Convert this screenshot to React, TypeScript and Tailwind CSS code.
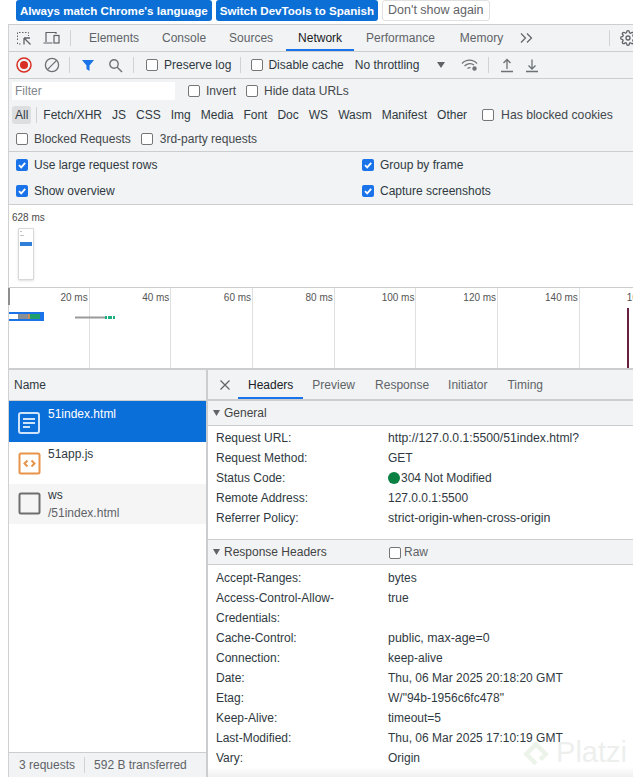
import React from "react";

const Check = ({ on = false, className = "" }: { on?: boolean; className?: string }) =>
  on ? (
    <span className={"flex h-3 w-3 shrink-0 items-center justify-center rounded-[2px] bg-[#1a73e8] " + className}>
      <svg width="10" height="10" viewBox="0 0 10 10" fill="none" stroke="#fff" strokeWidth="1.8">
        <path d="M2 5.2 4.2 7.4 8.2 2.8" />
      </svg>
    </span>
  ) : (
    <span className={"block h-3 w-3 shrink-0 rounded-[2px] border border-[#767676] bg-white " + className} />
  );

const Sep = ({ className = "" }: { className?: string }) => <span className={"block h-4 w-px shrink-0 bg-[#d0d3d6] " + className} />;

const Tab = ({ label, className = "", active = false, wide = false }: { label: string; className?: string; active?: boolean; wide?: boolean }) => (
  <div className={"relative flex h-full items-center " + (active ? "text-[#202124] " : "text-[#5f6368] ") + className}>
    {label}
    {active && <span className={"absolute bottom-0 h-[2px] bg-[#1a73e8] " + (wide ? "left-[-12px] right-[-12px]" : "left-[-10px] right-[-10px]")} />}
  </div>
);

const Row = ({ k, v, className = "" }: { k: string; v: React.ReactNode; className?: string }) => (
  <div className={"flex h-5 items-center " + className}>
    <span className="w-[180px] shrink-0 pl-[8px] text-[#303942]">{k}</span>
    <span className="whitespace-nowrap text-[#303942]">{v}</span>
  </div>
);

const ticks = ["20 ms", "40 ms", "60 ms", "80 ms", "100 ms", "120 ms", "140 ms", "160 ms"];
const filters = ["Fetch/XHR", "JS", "CSS", "Img", "Media", "Font", "Doc", "WS", "Wasm", "Manifest", "Other"];

export default function App() {
  return (
    <div className="relative h-[777px] w-[633px] overflow-hidden bg-white text-[12px] leading-none text-[#303942] [font-family:'Liberation_Sans',Arial,sans-serif]">
      {/* Info bar */}
      <div className="flex h-[24px] items-start gap-[4px] pl-[16px]">
        <button className="flex h-[21px] items-center rounded-[3px] bg-[#0b6fd6] px-[4px] text-[11.6px] font-bold text-white">Always match Chrome's language</button>
        <button className="flex h-[21px] items-center rounded-[3px] bg-[#0b6fd6] px-[4px] text-[11.6px] font-bold text-white">Switch DevTools to Spanish</button>
        <button className="flex h-[21px] items-center rounded-[3px] border border-[#e0e0e0] bg-white px-[5px] text-[12.5px] font-normal text-[#5f6368]">Don't show again</button>
      </div>

      <div className="ml-[8px] border-l border-[#cfd1d3]">
        {/* Tabs */}
        <div className="flex h-[28px] items-center border-y border-[#cbcdcf] bg-[#f1f3f4]">
          <svg className="ml-[7px] shrink-0" width="16" height="16" viewBox="0 0 16 16" fill="none" stroke="#5f6368">
            <path d="M1.5 10V2.5h11V6" strokeDasharray="1.5 1.5" />
            <path d="M1.5 12.5v1.5h3" strokeDasharray="1.5 1.5" />
            <path d="M8 8v6.5M8 8l6 0M8 8l6.5 6.5" strokeWidth="1.3" />
          </svg>
          <svg className="ml-[11px] shrink-0" width="18" height="16" viewBox="0 0 18 16" fill="none" stroke="#5f6368" strokeWidth="1.2">
            <path d="M3 12V2.5h10V4M.5 13h9" />
            <rect x="11" y="5.5" width="5" height="7.5" />
          </svg>
          <Sep className="ml-[9px]" />
          <Tab label="Elements" className="ml-[18px]" />
          <Tab label="Console" className="ml-[23px]" />
          <Tab label="Sources" className="ml-[23px]" />
          <Tab label="Network" active wide className="ml-[25px]" />
          <Tab label="Performance" className="ml-[24px]" />
          <Tab label="Memory" className="ml-[25px]" />
          <svg className="ml-[17px] shrink-0" width="13" height="12" viewBox="0 0 13 12" fill="none" stroke="#5f6368" strokeWidth="1.2">
            <path d="M1 1.5 5.5 6 1 10.5M7 1.5 11.5 6 7 10.5" />
          </svg>
          <Sep className="ml-[76px]" />
          <svg className="ml-[10px] shrink-0" width="16" height="16" viewBox="0 0 24 24" fill="none" stroke="#5f6368" strokeWidth="2">
            <circle cx="12" cy="12" r="3" />
            <path d="M19.4 15a1.7 1.7 0 0 0 .3 1.8l.1.1a2 2 0 1 1-2.9 2.9l-.1-.1a1.7 1.7 0 0 0-2.8 1.2V21a2 2 0 1 1-4 0v-.1a1.7 1.7 0 0 0-2.9-1.2l-.1.1a2 2 0 1 1-2.9-2.9l.1-.1a1.7 1.7 0 0 0-1.2-2.8H3a2 2 0 1 1 0-4h.1a1.7 1.7 0 0 0 1.2-2.9l-.1-.1a2 2 0 1 1 2.9-2.9l.1.1a1.7 1.7 0 0 0 1.8.3H9a1.7 1.7 0 0 0 1-1.5V3a2 2 0 1 1 4 0v.1a1.7 1.7 0 0 0 2.9 1.2l.1-.1a2 2 0 1 1 2.9 2.9l-.1.1a1.7 1.7 0 0 0-.3 1.8V9a1.7 1.7 0 0 0 1.5 1H21a2 2 0 1 1 0 4h-.1a1.7 1.7 0 0 0-1.5 1z" />
          </svg>
        </div>

        {/* Network toolbar */}
        <div className="flex h-[27px] items-center border-b border-[#cbcdcf] bg-[#f1f3f4] whitespace-nowrap">
          <svg className="ml-[7px] shrink-0" width="16" height="16" viewBox="0 0 16 16">
            <circle cx="8" cy="8" r="7" fill="none" stroke="#d93025" strokeWidth="1.5" />
            <circle cx="8" cy="8" r="4" fill="#d93025" />
          </svg>
          <svg className="ml-[12px] shrink-0" width="16" height="16" viewBox="0 0 16 16" fill="none" stroke="#6e7276" strokeWidth="1.3">
            <circle cx="8" cy="8" r="6.6" />
            <path d="M3.4 12.6 12.6 3.4" />
          </svg>
          <Sep className="ml-[9px]" />
          <svg className="ml-[11px] shrink-0" width="14" height="14" viewBox="0 0 14 14">
            <path d="M1 2h12L8.5 7.5V13L5.5 11V7.5z" fill="#1a73e8" />
          </svg>
          <svg className="ml-[13px] shrink-0" width="15" height="15" viewBox="0 0 15 15" fill="none" stroke="#6e7276" strokeWidth="1.4">
            <circle cx="6" cy="6" r="4.2" />
            <path d="M9 9l5 5" />
          </svg>
          <Sep className="ml-[10px]" />
          <Check className="ml-[12px]" />
          <span className="ml-[6px]">Preserve log</span>
          <Sep className="ml-[9px]" />
          <Check className="ml-[10px]" />
          <span className="ml-[5px]">Disable cache</span>
          <span className="ml-[11px]">No throttling</span>
          <svg className="ml-[18px] shrink-0" width="8" height="6" viewBox="0 0 8 6"><path d="M0 0h8L4 6z" fill="#5f6368" /></svg>
          <svg className="ml-[16px] shrink-0" width="18" height="14" viewBox="0 0 18 14" fill="none" stroke="#6e7276" strokeWidth="1.2">
            <path d="M1 5.5C5 1 12 1 16 5.5M3.5 8C6.5 5 10.5 5 13 7M6.5 10.5c1-.8 2-1 3-.8" />
            <circle cx="13.5" cy="10.5" r="1.6" fill="#6e7276" />
          </svg>
          <Sep className="ml-[9px]" />
          <svg className="ml-[11px] shrink-0" width="14" height="15" viewBox="0 0 14 15" fill="none" stroke="#6e7276" strokeWidth="1.3">
            <path d="M7 11V2M3.5 5 7 1.5 10.5 5M1 13.5h12" />
          </svg>
          <svg className="ml-[11px] shrink-0" width="14" height="15" viewBox="0 0 14 15" fill="none" stroke="#6e7276" strokeWidth="1.3">
            <path d="M7 1.5V10.5M3.5 7.5 7 11l3.5-3.5M1 13.5h12" />
          </svg>
        </div>

        {/* Filter */}
        <div className="border-b border-[#cbcdcf] bg-[#f1f3f4] whitespace-nowrap">
          <div className="flex h-[24px] items-center">
            <div className="ml-[3px] flex h-[18px] w-[163px] items-center bg-white pl-[3px] text-[#80868b]">Filter</div>
            <Check className="ml-[13px]" />
            <span className="ml-[6px] text-[#44484c]">Invert</span>
            <Check className="ml-[10px]" />
            <span className="ml-[6px] text-[#44484c]">Hide data URLs</span>
          </div>
          <div className="flex h-[24px] items-center">
            <span className="ml-[3px] flex h-[18px] items-center rounded-[3px] bg-[#dcdee0] px-[3px] text-[#303942]">All</span>
            <Sep className="ml-[5px]" />
            {filters.map((f, i) => (
              <span key={f} className={i === 0 ? "ml-[6px]" : "ml-[10px]"}>{f}</span>
            ))}
            <Check className="ml-[15px]" />
            <span className="ml-[7px] text-[12.2px] text-[#44484c]">Has blocked cookies</span>
          </div>
          <div className="flex h-[24px] items-center">
            <Check className="ml-[7px]" />
            <span className="ml-[6px] text-[#44484c]">Blocked Requests</span>
            <Check className="ml-[10px]" />
            <span className="ml-[7px] text-[#44484c]">3rd-party requests</span>
          </div>
        </div>

        {/* Settings */}
        <div className="grid h-[53px] grid-cols-[346px_1fr] content-start gap-y-[2px] border-b border-[#cbcdcf] bg-[#f1f3f4] pt-[1px] whitespace-nowrap">
          {["Use large request rows", "Group by frame", "Show overview", "Capture screenshots"].map((t) => (
            <div key={t} className="flex h-[24px] items-center pl-[7px]">
              <Check on />
              <span className="ml-[6px]">{t}</span>
            </div>
          ))}
        </div>

        {/* Overview */}
        <div className="h-[83px] border-b border-[#cbcdcf] bg-white pt-[8px]">
          <div className="pl-[3px] text-[10px] text-[#4a4a4a]">628 ms</div>
          <div className="ml-[9px] mt-[5px] flex h-[52px] w-[16px] flex-col rounded-[1px] border border-[#d8d8d8] bg-white px-[1px] pt-[2px] shadow-sm">
            <span className="h-px w-[2px] bg-[#c4c4c4]" />
            <span className="mt-[3px] h-px w-[4px] bg-[#c4c4c4]" />
            <span className="mt-[6px] h-[4px] w-full bg-[#2f7fd8]" />
          </div>
        </div>

        {/* Waterfall */}
        <div className="relative h-[82px] border-b-[2px] border-[#cbcdcf] bg-white">
          <div className="flex h-full">
            {ticks.map((t) => (
              <div key={t} className="flex h-full w-[81.7px] shrink-0 justify-end overflow-visible border-r border-[#e0e0e0] pr-[1px] pt-[5px] text-[10px] whitespace-nowrap text-[#555] first:w-[80.7px]">
                {t}
              </div>
            ))}
          </div>
          <svg className="absolute left-0 top-0 overflow-visible" width="624" height="80" viewBox="0 0 624 80">
            <rect x="-1" y="0" width="2" height="17" fill="#8d8d8d" />
            <rect x="0" y="24" width="35" height="9" fill="#1a73e8" />
            <rect x="0" y="26" width="9" height="5" fill="#fff" />
            <rect x="9" y="26" width="10" height="5" fill="#8a8f94" />
            <rect x="19" y="26" width="2" height="5" fill="#c4915e" />
            <rect x="21" y="26" width="10" height="5" fill="#1f9e6e" />
            <rect x="66" y="28.5" width="30" height="2" fill="#9a9a9a" />
            <rect x="96" y="28" width="10" height="3" fill="#1fae82" />
            <rect x="98" y="28" width="1" height="3" fill="#fff" />
            <rect x="103" y="28" width="1" height="3" fill="#fff" />
            <rect x="618" y="20" width="2" height="60" fill="#6b1f3f" />
          </svg>
        </div>

        {/* Split */}
        <div className="flex h-[407px]">
          <div className="flex w-[199px] shrink-0 flex-col border-r-[2px] border-[#cbcdcf]">
            <div className="flex h-[31px] shrink-0 items-center border-b border-[#cbcdcf] bg-[#f1f3f4] pl-[5px]">Name</div>
            <div className="flex h-[41px] shrink-0 bg-[#0b6fd9] text-white">
              <svg className="ml-[8px] mt-[10px] shrink-0" width="24" height="24" viewBox="0 0 24 24" fill="none" stroke="#cfe3fa" strokeWidth="2">
                <rect x="2" y="2" width="20" height="20" rx="2" />
                <path d="M6 8h12M6 12h12M6 16h7" />
              </svg>
              <span className="ml-[7px] mt-[7px]">51index.html</span>
            </div>
            <div className="flex h-[42px] shrink-0 bg-white text-[#303942]">
              <svg className="ml-[9px] mt-[10px] shrink-0" width="23" height="23" viewBox="0 0 23 23" fill="none" stroke="#e8934a" strokeWidth="2">
                <rect x="1.5" y="1.5" width="20" height="20" rx="1.5" />
                <path d="M9.5 8.5 6.5 11.5l3 3M13.5 8.5l3 3-3 3" />
              </svg>
              <span className="ml-[7px] mt-[6px]">51app.js</span>
            </div>
            <div className="flex h-[40px] shrink-0 bg-[#f5f5f5] text-[#303942]">
              <svg className="ml-[9px] mt-[8px] shrink-0" width="23" height="23" viewBox="0 0 23 23" fill="none" stroke="#6e6e6e" strokeWidth="2">
                <rect x="1.5" y="1.5" width="20" height="20" rx="1.5" />
              </svg>
              <div className="ml-[7px] flex flex-col pt-[5px]">
                <span>ws</span>
                <span className="mt-[6px] text-[#5f6368]">/51index.html</span>
              </div>
            </div>
            <div className="flex-1 bg-white" />
            <div className="flex h-[25px] shrink-0 items-center border-t border-[#cbcdcf] bg-[#f1f3f4] pl-[10px] whitespace-nowrap text-[#5f6368]">
              <span>3 requests</span>
              <Sep className="ml-[9px]" />
              <span className="ml-[9px]">592 B transferred</span>
            </div>
          </div>

          <div className="min-w-0 flex-1 whitespace-nowrap">
            <div className="flex h-[31px] items-center border-b-[2px] border-[#cbcdcf] bg-[#f1f3f4]">
              <svg className="ml-[12px] shrink-0" width="10" height="10" viewBox="0 0 10 10" stroke="#5f6368" strokeWidth="1.2"><path d="M.5.5l9 9M9.5.5l-9 9" /></svg>
              <Tab label="Headers" active className="ml-[18px]" />
              <Tab label="Preview" className="ml-[19px]" />
              <Tab label="Response" className="ml-[20px]" />
              <Tab label="Initiator" className="ml-[19px]" />
              <Tab label="Timing" className="ml-[20px]" />
            </div>
            <div className="flex h-[25px] items-center border-b border-[#cbcdcf] bg-[#f1f3f4] pl-[5px]">
              <svg width="7" height="6" viewBox="0 0 7 6"><path d="M0 0h7L3.5 6z" fill="#5f6368" /></svg>
              <span className="ml-[4px] text-[#444]">General</span>
            </div>
            <div className="h-[114px] border-b border-[#cbcdcf] pt-[2px] bg-white">
              <Row k="Request URL:" v={<span className="text-[12.2px]">http://127.0.0.1:5500/51index.html?</span>} />
              <Row k="Request Method:" v="GET" />
              <Row
                k="Status Code:"
                v={
                  <span className="flex items-center">
                    <span className="mr-[1px] block h-3 w-3 rounded-full bg-[#0b8043]" />304 Not Modified
                  </span>
                }
              />
              <Row k="Remote Address:" v="127.0.0.1:5500" />
              <Row k="Referrer Policy:" v={<span className="text-[12.4px]">strict-origin-when-cross-origin</span>} />
            </div>
            <div className="flex h-[25px] items-center border-b border-[#cbcdcf] bg-[#f1f3f4] pl-[5px]">
              <svg className="shrink-0" width="7" height="6" viewBox="0 0 7 6"><path d="M0 0h7L3.5 6z" fill="#5f6368" /></svg>
              <span className="ml-[4px] w-[165px] text-[#444]">Response Headers</span>
              <Check className="mt-[2px]" />
              <span className="ml-[3px] text-[#5f6368]">Raw</span>
            </div>
            <div className="pt-[3px]">
              <Row k="Accept-Ranges:" v="bytes" />
              <Row k="Access-Control-Allow-" v="true" />
              <Row k="Credentials:" v="" />
              <Row k="Cache-Control:" v={<span className="text-[12.4px]">public, max-age=0</span>} />
              <Row k="Connection:" v="keep-alive" />
              <Row k="Date:" v="Thu, 06 Mar 2025 20:18:20 GMT" />
              <Row k="Etag:" v={'W/"94b-1956c6fc478"'} />
              <Row k="Keep-Alive:" v="timeout=5" />
              <Row k="Last-Modified:" v="Thu, 06 Mar 2025 17:10:19 GMT" />
              <Row k="Vary:" v="Origin" />
            </div>
          </div>
        </div>
      </div>

      {/* Watermark */}
      <div className="pointer-events-none absolute bottom-[10px] right-[6px] flex items-center gap-[6px] text-[29px] text-[#e9ebe9]/80">
        <svg width="28" height="28" viewBox="0 0 26 26" fill="none" stroke="#e4efdf" strokeWidth="4" opacity="0.7"><path d="M13 23 4 14l9-9 9 9-5 5" /></svg>
        Platzi
      </div>
      <div className="pointer-events-none absolute bottom-0 left-[208px] right-0 h-[10px] bg-gradient-to-b from-transparent to-[#f0f0f0]" />
    </div>
  );
}
